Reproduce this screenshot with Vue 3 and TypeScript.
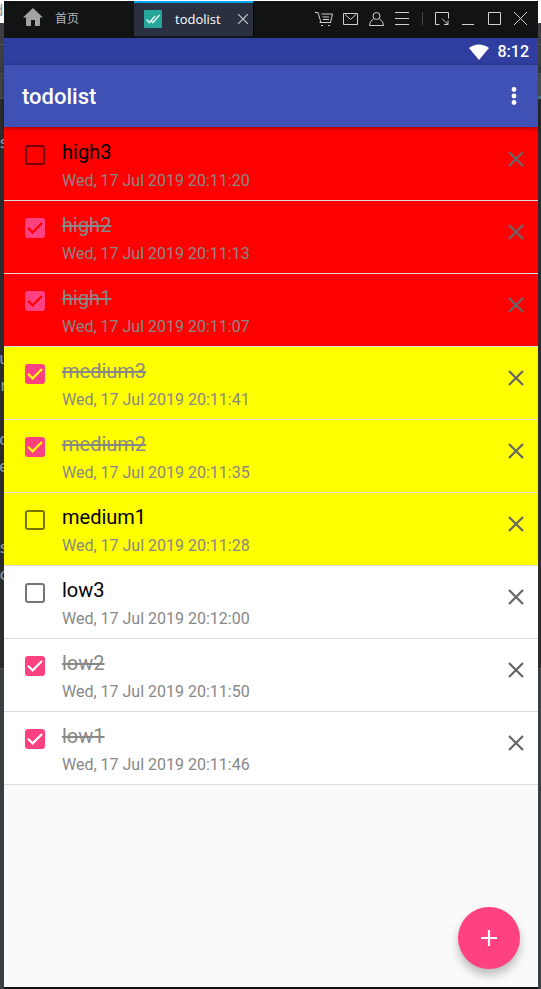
<script setup lang="ts">
import { ref } from 'vue'

type Priority = 'high' | 'medium' | 'low'

interface Todo {
  id: number
  title: string
  date: string
  priority: Priority
  done: boolean
}

const todos = ref<Todo[]>([
  { id: 1, title: 'high3', date: 'Wed, 17 Jul 2019 20:11:20', priority: 'high', done: false },
  { id: 2, title: 'high2', date: 'Wed, 17 Jul 2019 20:11:13', priority: 'high', done: true },
  { id: 3, title: 'high1', date: 'Wed, 17 Jul 2019 20:11:07', priority: 'high', done: true },
  { id: 4, title: 'medium3', date: 'Wed, 17 Jul 2019 20:11:41', priority: 'medium', done: true },
  { id: 5, title: 'medium2', date: 'Wed, 17 Jul 2019 20:11:35', priority: 'medium', done: true },
  { id: 6, title: 'medium1', date: 'Wed, 17 Jul 2019 20:11:28', priority: 'medium', done: false },
  { id: 7, title: 'low3', date: 'Wed, 17 Jul 2019 20:12:00', priority: 'low', done: false },
  { id: 8, title: 'low2', date: 'Wed, 17 Jul 2019 20:11:50', priority: 'low', done: true },
  { id: 9, title: 'low1', date: 'Wed, 17 Jul 2019 20:11:46', priority: 'low', done: true },
])

// Source lines of the editor behind the window; only the first letter peeks out.
const editorLines = ['s', '', '', '', '', '', '', '', 'u', 'r', '', 'o', 'e', '', '', 's', 'c']

function removeTodo(id: number): void {
  todos.value = todos.value.filter((t) => t.id !== id)
}
</script>

<template>
  <div class="desktop">
    <div class="gutter" aria-hidden="true">
      <div class="editor-top">d</div>
      <div class="editor-bar"></div>
      <div class="editor-tabs"></div>
      <div class="editor-code">
        <div v-for="(line, i) in editorLines" :key="i" class="code-line">{{ line }}</div>
      </div>
      <div class="editor-foot"></div>
    </div>

    <div class="window">
      <header class="titlebar">
        <a class="home" href="#">
          <svg width="20" height="18" viewBox="0 0 20 18"><path d="M10 0 20 9.500h-3V17q0 1-1 1h-4v-6H8v6H4q-1 0-1-1V9.500H0z" fill="#a3a3a3" /></svg>
          <span>首页</span>
        </a>
        <div class="tab">
          <svg width="18" height="18" viewBox="0 0 18 18">
            <rect width="18" height="18" rx="1" fill="#26a69a" />
            <path d="M2.500 9.500 5.500 12.500 11 6M7.500 11l1.500 1.500L15.500 5" fill="none" stroke="#d5f0ed" stroke-width="1.600" />
          </svg>
          <span class="tab-name">todolist</span>
          <button class="tab-close" type="button" aria-label="Close tab">
            <svg width="10" height="10" viewBox="0 0 10 10"><path d="M0 0l10 10M10 0 0 10" stroke="#c4c8d0" stroke-width="1.200" /></svg>
          </button>
        </div>
        <nav class="tools">
          <button type="button" aria-label="Shop">
            <svg width="18" height="14" viewBox="0 0 18 14"><path d="M0 .500h3l3 10h9.500l2-8.500H6.500M7.500 5H14M8 7.500h6M4.500 10.500h11" /><path d="M6 13.500h2M13 13.500h2" /></svg>
          </button>
          <button type="button" aria-label="Mail">
            <svg width="15" height="12" viewBox="0 0 15 12"><path d="M.500.500h14v11H.500zM2 1.500l5.500 5L13 1.500" /></svg>
          </button>
          <button type="button" aria-label="Account">
            <svg width="15" height="14" viewBox="0 0 15 14"><circle cx="7.500" cy="4" r="3.500" /><path d="M4.500 7C2 8.500.800 10.500.500 13.500h14C14.200 10.500 13 8.500 10.500 7" /></svg>
          </button>
          <button type="button" aria-label="Menu">
            <svg width="14" height="13" viewBox="0 0 14 13"><path d="M0 .500h14M0 6.500h14M0 12.500h14" /></svg>
          </button>
          <span class="separator"></span>
          <button type="button" aria-label="Resize">
            <svg width="14" height="13" viewBox="0 0 14 13"><path d="M4.500 12.500h-4V.500h13v6M7 6.500l6 6M13 8.500v4H9" /></svg>
          </button>
          <button type="button" aria-label="Minimize">
            <svg width="12" height="13" viewBox="0 0 12 13"><path d="M0 12.500h12" /></svg>
          </button>
          <button type="button" aria-label="Maximize">
            <svg width="13" height="13" viewBox="0 0 13 13"><path d="M.500.500h12v12H.500z" /></svg>
          </button>
          <button type="button" aria-label="Close">
            <svg width="13" height="13" viewBox="0 0 13 13"><path d="M0 0l13 13M13 0 0 13" /></svg>
          </button>
        </nav>
      </header>

      <div class="statusbar">
        <svg width="20" height="16" viewBox="0 0 20 16"><path d="M0 4C5.500-.800 14.500-.800 20 4L10 16z" fill="#fff" /></svg>
        <span>8:12</span>
      </div>

      <div class="appbar">
        <h1>todolist</h1>
        <button class="more" type="button" aria-label="More options">
          <svg width="6" height="20" viewBox="0 0 6 20" fill="#fff"><circle cx="3" cy="3.500" r="2.400" /><circle cx="3" cy="10" r="2.400" /><circle cx="3" cy="16.500" r="2.400" /></svg>
        </button>
      </div>

      <main class="content">
        <ul class="list">
          <li v-for="todo in todos" :key="todo.id" class="row" :class="[todo.priority, { done: todo.done }]">
            <span class="check">
              <input :id="`todo-${todo.id}`" v-model="todo.done" type="checkbox" />
              <svg v-if="todo.done" width="20" height="20" viewBox="0 0 20 20"><path d="M3 9.800 7.600 14.400 17 5" /></svg>
            </span>
            <div class="text">
              <label class="name" :for="`todo-${todo.id}`">{{ todo.title }}</label>
              <time class="date">{{ todo.date }}</time>
            </div>
            <button class="remove" type="button" :aria-label="`Delete ${todo.title}`" @click="removeTodo(todo.id)">
              <svg width="16" height="16" viewBox="0 0 16 16"><path d="M1 1l14 14M15 1 1 15" stroke="#666" stroke-width="2.200" /></svg>
            </button>
          </li>
        </ul>
        <button class="fab" type="button" aria-label="Add todo">
          <svg width="16" height="16" viewBox="0 0 16 16"><path d="M8 0v16M0 8h16" stroke="#fff" stroke-width="2.200" /></svg>
        </button>
      </main>
    </div>

    <div class="gutter right" aria-hidden="true">
      <div class="editor-top"></div>
      <div class="editor-bar"></div>
      <div class="editor-tabs"></div>
      <div class="editor-code"></div>
      <div class="editor-foot"></div>
    </div>
  </div>
</template>

<style>
body {
  background: #fff;
}
</style>

<style scoped>
* {
  box-sizing: border-box;
}

button {
  display: flex;
  align-items: center;
  justify-content: center;
  padding: 0;
  border: 0;
  background: none;
  cursor: pointer;
}

svg {
  display: block;
  flex: none;
}

.desktop {
  display: grid;
  grid-template-columns: 4px minmax(0, 1fr) 3px;
  min-height: 100vh;
  font-family: Roboto, "Noto Sans CJK SC", sans-serif;
}

.gutter {
  display: flex;
  flex-direction: column;
  overflow: hidden;
  font-family: "DejaVu Sans Mono", monospace;
  font-size: 16px;
  color: #8f9bab;
}

.editor-top {
  height: 23px;
  line-height: 22px;
  background: #fff;
  text-indent: -6px;
}

.editor-bar {
  height: 50px;
  background: linear-gradient(#3c3f41 21px, #555 21px, #555 22px, #3c3f41 22px);
}

.editor-tabs {
  height: 26px;
  border-top: 1px solid #555;
  border-bottom: 1px solid #5a5a5a;
  background: #414344;
}

.right .editor-tabs {
  border-bottom: 3px solid #4a8090;
  background: #515450;
}

.editor-code {
  height: 569px;
  padding-top: 30px;
  background: #2b2b2b;
}

.code-line {
  height: 27px;
  line-height: 27px;
  text-indent: -1px;
}

.editor-foot {
  flex: 1;
  border-top: 1px solid #505254;
  background: #3c3f41;
}

.window {
  display: flex;
  flex-direction: column;
  min-width: 0;
  margin-top: 1px;
  border-bottom: 2px solid #121212;
}

.titlebar {
  display: flex;
  height: 37px;
  padding-right: 5px;
  background: #121315;
}

.home {
  display: flex;
  align-items: center;
  gap: 12px;
  width: 130px;
  padding-left: 19px;
  padding-bottom: 5px;
  color: #b4b4b4;
  font-size: 12px;
  text-decoration: none;
}

.tab {
  display: flex;
  align-items: center;
  width: 120px;
  height: 35px;
  padding: 0 5px 2px 10px;
  border-top: 2px solid #00a2f2;
  border-right: 1px solid #000;
  background: #2a3040;
}

.tab-name {
  flex: 1;
  padding-left: 13px;
  color: #fff;
  font-family: "Open Sans", "Noto Sans", sans-serif;
  font-size: 13px;
}

.tools {
  display: flex;
  align-items: center;
  margin-left: auto;
  padding-bottom: 2px;
}

.tools button {
  width: 26px;
  height: 26px;
}

.tools svg {
  fill: none;
  stroke: #d0d0d0;
  stroke-width: 1;
}

.separator {
  width: 1px;
  height: 13px;
  margin: 0 6px 0 7px;
  background: #444;
}

.statusbar {
  display: flex;
  align-items: center;
  justify-content: flex-end;
  gap: 9px;
  height: 27px;
  padding-right: 9px;
  background: #303f9f;
  color: #fff;
  font-size: 16px;
  font-weight: 500;
}

.appbar {
  display: flex;
  align-items: center;
  justify-content: space-between;
  z-index: 1;
  height: 62px;
  padding: 0 12px 0 18px;
  background: #3f51b5;
  box-shadow: 0 1px 4px rgba(0, 0, 0, 0.45);
  color: #fff;
}

h1 {
  margin: 0;
  font-size: 22px;
  font-weight: 500;
}

.more {
  width: 24px;
  height: 40px;
}

.content {
  display: flex;
  flex: 1;
  flex-direction: column;
  background: #fafafa;
}

.list {
  margin: 0;
  padding: 1px 0 0;
  background: #f00;
  list-style: none;
}

.row {
  display: flex;
  align-items: flex-start;
  height: 73px;
  padding: 12px 14px 0 21px;
  border-bottom: 1px solid #dcdcdc;
}

.high {
  --row: #f00;
  background: #f00;
}

.medium {
  --row: #ff0;
  background: #ff0;
}

.low {
  --row: #fff;
  background: #fff;
}

.check {
  display: grid;
  width: 20px;
  margin-top: 5px;
}

.check input {
  grid-area: 1 / 1;
  appearance: none;
  width: 20px;
  height: 20px;
  margin: 0;
  border: 2px solid rgba(0, 0, 0, 0.54);
  border-radius: 3px;
}

.check input:checked {
  border-color: #ff4081;
  background: #ff4081;
}

.check svg {
  grid-area: 1 / 1;
  fill: none;
  stroke: var(--row);
  stroke-width: 2.2;
  pointer-events: none;
}

.text {
  display: flex;
  flex: 1;
  flex-direction: column;
  gap: 7px;
  padding-left: 17px;
}

.name {
  align-self: flex-start;
  color: #000;
  font-size: 20px;
  line-height: 24px;
}

.done .name {
  color: #888;
  text-decoration: line-through;
}

.date {
  color: #888;
  font-size: 16px;
  line-height: 20px;
}

.remove {
  width: 16px;
  height: 16px;
  margin-top: 11px;
}

.fab {
  align-self: flex-end;
  width: 62px;
  height: 62px;
  margin: auto 18px 18px;
  border-radius: 50%;
  background: #ff4081;
  box-shadow: 0 6px 10px rgba(0, 0, 0, 0.25);
}
</style>
